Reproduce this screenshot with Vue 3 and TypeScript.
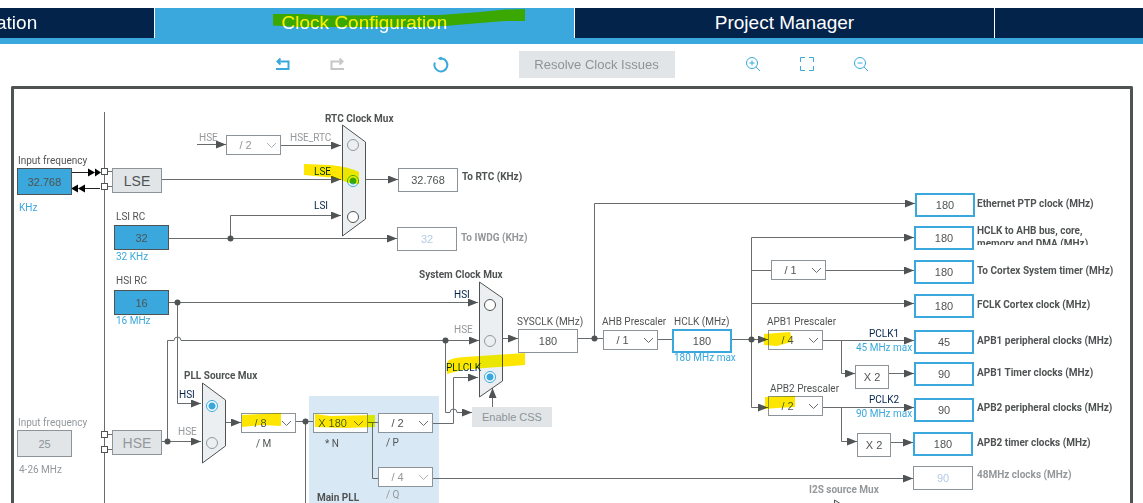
<script setup lang="ts">
import { reactive, ref } from 'vue'

type Tone = 'plain' | 'source' | 'clock' | 'muted' | 'off'

interface Field { id: string; x: number; y: number; value: string; tone: Tone; w?: number; h?: number; name?: string }
interface Divider { id: string; x: number; y: number; value: string; disabled?: boolean; name?: string }
interface Caption { x: number; y: number; text: string; kind: string; field?: string }
interface Choice { group: string; value: string; x: number; y: number; disabled?: boolean }

// Top-left corner of the drawing surface in diagram coordinates
const origin = { x: 14, y: 89 }

const place = (x: number, y: number, w?: number, h?: number) => ({
  left: `${x - origin.x}px`,
  top: `${y - origin.y}px`,
  ...(w ? { width: `${w}px` } : {}),
  ...(h ? { height: `${h}px` } : {}),
})

const fields = reactive<Field[]>([
  { id: 'lse-in', x: 17, y: 168, w: 55, h: 27, value: '32.768', tone: 'source' },
  { id: 'hse-in', x: 17, y: 430, w: 55, h: 27, value: '25', tone: 'off' },
  { id: 'lsi', x: 114, y: 225, w: 55, h: 25, value: '32', tone: 'source' },
  { id: 'hsi', x: 114, y: 290, w: 55, h: 25, value: '16', tone: 'source' },
  { id: 'rtc', x: 398, y: 168, value: '32.768', tone: 'plain' },
  { id: 'iwdg', x: 397, y: 227, value: '32', tone: 'muted' },
  { id: 'sysclk', x: 518, y: 329, value: '180', tone: 'plain' },
  { id: 'hclk', x: 672, y: 329, value: '180', tone: 'clock' },
  { id: 'eth', x: 915, y: 193, value: '180', tone: 'clock' },
  { id: 'ahb-bus', x: 914, y: 226, value: '180', tone: 'clock' },
  { id: 'cortex', x: 914, y: 260, value: '180', tone: 'clock' },
  { id: 'fclk', x: 914, y: 294, value: '180', tone: 'clock' },
  { id: 'apb1-per', x: 914, y: 330, value: '45', tone: 'clock' },
  { id: 'apb1-tim', x: 914, y: 362, value: '90', tone: 'clock' },
  { id: 'apb2-per', x: 914, y: 398, value: '90', tone: 'clock' },
  { id: 'apb2-tim', x: 913, y: 432, value: '180', tone: 'clock' },
  { id: 'clk48', x: 913, y: 466, value: '90', tone: 'muted' },
  { id: 'apb1-x2', x: 855, y: 365, w: 34, value: 'X 2', tone: 'plain', name: 'APB1 timer multiplier' },
  { id: 'apb2-x2', x: 857, y: 433, w: 34, value: 'X 2', tone: 'plain', name: 'APB2 timer multiplier' },
])

const dividers = reactive<Divider[]>([
  { id: 'hse-rtc', x: 226, y: 135, value: '/ 2', disabled: true },
  { id: 'pll-m', x: 241, y: 413, value: '/ 8' },
  { id: 'pll-n', x: 313, y: 413, value: 'X 180' },
  { id: 'pll-p', x: 378, y: 413, value: '/ 2' },
  { id: 'pll-q', x: 378, y: 467, value: '/ 4', disabled: true },
  { id: 'ahb', x: 603, y: 330, value: '/ 1' },
  { id: 'systick', x: 771, y: 260, value: '/ 1', name: 'Cortex System timer prescaler' },
  { id: 'apb1', x: 768, y: 330, value: '/ 4' },
  { id: 'apb2', x: 768, y: 396, value: '/ 2' },
])

// y is the vertical middle of the caption's first line
const captions: Caption[] = [
  { x: 18, y: 161, text: 'Input frequency', kind: 'text', field: 'lse-in' },
  { x: 19, y: 208, text: 'KHz', kind: 'unit' },
  { x: 18, y: 423, text: 'Input frequency', kind: 'dim', field: 'hse-in' },
  { x: 19, y: 470, text: '4-26 MHz', kind: 'dim' },
  { x: 116, y: 217, text: 'LSI RC', kind: 'text', field: 'lsi' },
  { x: 116, y: 257, text: '32 KHz', kind: 'unit' },
  { x: 116, y: 281, text: 'HSI RC', kind: 'text', field: 'hsi' },
  { x: 116, y: 321, text: '16 MHz', kind: 'unit' },
  { x: 199, y: 138, text: 'HSE', kind: 'dim' },
  { x: 290, y: 138, text: 'HSE_RTC', kind: 'dim', field: 'hse-rtc' },
  { x: 314, y: 172, text: 'LSE', kind: 'signal', field: 'rtc-LSE' },
  { x: 314, y: 206, text: 'LSI', kind: 'signal', field: 'rtc-LSI' },
  { x: 325, y: 119, text: 'RTC Clock Mux', kind: 'title' },
  { x: 462, y: 177, text: 'To RTC (KHz)', kind: 'title', field: 'rtc' },
  { x: 461, y: 238, text: 'To IWDG (KHz)', kind: 'title dim', field: 'iwdg' },
  { x: 419, y: 275, text: 'System Clock Mux', kind: 'title' },
  { x: 454, y: 295, text: 'HSI', kind: 'signal', field: 'sys-HSI' },
  { x: 454, y: 330, text: 'HSE', kind: 'dim', field: 'sys-HSE' },
  { x: 446, y: 368, text: 'PLLCLK', kind: 'signal', field: 'sys-PLLCLK' },
  { x: 184, y: 376, text: 'PLL Source Mux', kind: 'title' },
  { x: 179, y: 395, text: 'HSI', kind: 'signal', field: 'pll-HSI' },
  { x: 178, y: 432, text: 'HSE', kind: 'dim', field: 'pll-HSE' },
  { x: 256, y: 444, text: '/ M', kind: 'text', field: 'pll-m' },
  { x: 325, y: 444, text: '* N', kind: 'text', field: 'pll-n' },
  { x: 386, y: 443, text: '/ P', kind: 'text', field: 'pll-p' },
  { x: 386, y: 495, text: '/ Q', kind: 'dim', field: 'pll-q' },
  { x: 317, y: 498, text: 'Main PLL', kind: 'title' },
  { x: 517, y: 322, text: 'SYSCLK (MHz)', kind: 'text', field: 'sysclk' },
  { x: 602, y: 322, text: 'AHB Prescaler', kind: 'text', field: 'ahb' },
  { x: 674, y: 322, text: 'HCLK (MHz)', kind: 'text', field: 'hclk' },
  { x: 674, y: 358, text: '180 MHz max', kind: 'unit' },
  { x: 767, y: 322, text: 'APB1 Prescaler', kind: 'text', field: 'apb1' },
  { x: 770, y: 389, text: 'APB2 Prescaler', kind: 'text', field: 'apb2' },
  { x: 869, y: 334, text: 'PCLK1', kind: 'signal' },
  { x: 856, y: 348, text: '45 MHz max', kind: 'unit' },
  { x: 869, y: 400, text: 'PCLK2', kind: 'signal' },
  { x: 856, y: 414, text: '90 MHz max', kind: 'unit' },
  { x: 809, y: 490, text: 'I2S source Mux', kind: 'title dim' },
  { x: 977, y: 204, text: 'Ethernet PTP clock (MHz)', kind: 'title', field: 'eth' },
  { x: 977, y: 231, text: 'HCLK to AHB bus, core,\nmemory and DMA (MHz)', kind: 'title clipped', field: 'ahb-bus' },
  { x: 977, y: 271, text: 'To Cortex System timer (MHz)', kind: 'title', field: 'cortex' },
  { x: 977, y: 305, text: 'FCLK Cortex clock (MHz)', kind: 'title', field: 'fclk' },
  { x: 977, y: 341, text: 'APB1 peripheral clocks (MHz)', kind: 'title', field: 'apb1-per' },
  { x: 977, y: 373, text: 'APB1 Timer clocks (MHz)', kind: 'title', field: 'apb1-tim' },
  { x: 977, y: 408, text: 'APB2 peripheral clocks (MHz)', kind: 'title', field: 'apb2-per' },
  { x: 977, y: 443, text: 'APB2 timer clocks (MHz)', kind: 'title', field: 'apb2-tim' },
  { x: 977, y: 475, text: '48MHz clocks (MHz)', kind: 'title dim', field: 'clk48' },
]

const choices: Choice[] = [
  { group: 'rtc', value: 'HSE', x: 353, y: 145, disabled: true },
  { group: 'rtc', value: 'LSE', x: 353, y: 181 },
  { group: 'rtc', value: 'LSI', x: 353, y: 217 },
  { group: 'sys', value: 'HSI', x: 490, y: 305 },
  { group: 'sys', value: 'HSE', x: 490, y: 341, disabled: true },
  { group: 'sys', value: 'PLLCLK', x: 490, y: 377 },
  { group: 'pll', value: 'HSI', x: 212, y: 406 },
  { group: 'pll', value: 'HSE', x: 212, y: 443, disabled: true },
]
const selected = reactive<Record<string, string>>({ rtc: 'LSE', sys: 'PLLCLK', pll: 'HSI' })

const arrows = [
  'M197 144.5H226', 'M281 145.5H341', 'M162 179.5H341', 'M230.5 238.5V215.5H341', 'M366 179.5H398',
  'M169 238.5H397', 'M169 302.5H478', 'M177.5 302.5V403.5H201', 'M162 441.5H201',
  'M167.5 441.5V340.5H174A3.5 3.5 0 0 1 181 340.5H479', 'M226 422.5H241',
  'M433 423.5H453.5V377.5H478', 'M445.5 340.5V412.5H450A3.5 3.5 0 0 1 457 412.5H472',
  'M492.5 407V388', 'M503 338.5H518', 'M594.5 338.5V203.5H915', 'M732 339.5H768',
  'M751.5 339.5V237.5H914', 'M826 270.5H914', 'M751.5 303.5H914', 'M823 340.5H914',
  'M841.5 340.5V373.5H855', 'M889 373.5H914', 'M751.5 339.5V407.5H768', 'M823 407.5H914',
  'M841.5 407.5V441.5H857', 'M891 442.5H913', 'M433 478.5H913',
]
const links = [
  'M104.5 112V520', 'M107 171.5H112M107 186.5H112M107 434.5H112M107 449.5H112',
  'M296 421.5H313M305.5 421.5V520', 'M368 422.5H378M372.5 422.5V478.5H378',
  'M578 338.5H603', 'M658 339.5H672', 'M751.5 270.5H771',
]
const joints = [[230.5, 238.5], [177.5, 302.5], [167.5, 441.5], [305.5, 421.5], [445.5, 340.5], [594.5, 338.5], [751.5, 339.5]]
const ports = [171, 186, 434, 449]
const muxes = [
  '342.5,125 365.5,142 365.5,219 342.5,236',
  '479.5,282 502.5,298 502.5,381 479.5,397',
  '202.5,383 225.5,400 225.5,446 202.5,463',
]
const marks = [
  'M304 164L330 165Q350 167 359 172V184L349 183L336 178L304 175Z',
  'M447 363Q448 358 465 357L525 353L525 365L485 368L462 370L447 374Z',
  'M242 415L281 413L281 426L262 425L242 427Z',
  'M315 414L330 416L375 415L375 427L345 428L315 427Z',
  'M764 334L790 332L791 335L791 342L777 346L764 345Z',
  'M765 397L795 396L795 407L777 408L765 409Z',
]
const tab = ref('Clock Configuration')
const tabs = ['ation', 'Clock Configuration', 'Project Manager', '']
</script>

<template>
  <div class="page">
    <nav class="tabs" aria-label="Views">
      <button v-for="name in tabs" :key="name" type="button" class="tab"
        :class="{ active: tab === name, cut: name === 'ation' }" :aria-label="name || 'Tools'" @click="tab = name">
        {{ name }}
        <svg v-if="name === 'Clock Configuration'" class="tab-mark" width="252" height="20" viewBox="273 8 252 20" aria-hidden="true">
          <path d="M273 14L300 14L330 15.500L440 15L480 12L505 9.500L525 9V21L505 21L480 23L445 26L420 27H300L273 25.500Z" />
        </svg>
      </button>
    </nav>

    <div class="toolbar" role="toolbar">
      <button type="button" class="tool" aria-label="Undo">
        <svg viewBox="0 0 20 20"><path class="bold" d="M3 15H15.500V7.500H5.500M7.500 4.500L4.500 7.500L7.500 10.500" /></svg>
      </button>
      <button type="button" class="tool" aria-label="Redo" disabled>
        <svg viewBox="0 0 20 20"><path class="bold" d="M17 15H4.500V7.500H14.500M12.500 4.500L15.500 7.500L12.500 10.500" /></svg>
      </button>
      <button type="button" class="tool refresh" aria-label="Refresh">
        <svg viewBox="0 0 20 20"><path class="bold" d="M3.800 8.500A6.500 6.500 0 1 0 11 4.500H8.500" /><path class="solid" d="M6.500 4.500L10.500 2.500V6.500Z" /></svg>
      </button>
      <button type="button" class="resolve" disabled>Resolve Clock Issues</button>
      <button type="button" class="tool" aria-label="Zoom in">
        <svg viewBox="0 0 20 20"><circle cx="9" cy="9" r="5.500" /><path d="M13 13L17 17M6.500 9H11.500M9 6.500V11.500" /></svg>
      </button>
      <button type="button" class="tool" aria-label="Fit">
        <svg viewBox="0 0 20 20"><path d="M3.500 8V3.500H8M12 3.500H16.500V8M16.500 12V16.500H12M8 16.500H3.500V12" /></svg>
      </button>
      <button type="button" class="tool" aria-label="Zoom out">
        <svg viewBox="0 0 20 20"><circle cx="9" cy="9" r="5.500" /><path d="M13 13L17 17M6.500 9H11.500" /></svg>
      </button>
    </div>

    <main class="board">
      <svg class="wires" width="1116" height="431" viewBox="14 89 1116 431" aria-hidden="true">
        <defs>
          <marker id="tip" markerUnits="userSpaceOnUse" markerWidth="10" markerHeight="8" refX="10" refY="4" orient="auto">
            <path d="M0 0L10 4L0 8Z" fill="#505354" />
          </marker>
        </defs>
        <rect x="309" y="396" width="130" height="124" fill="#d9e8f5" />
        <path v-for="d in links" :key="d" :d="d" class="wire" />
        <path v-for="d in arrows" :key="d" :d="d" class="wire" marker-end="url(#tip)" />
        <circle v-for="(j, i) in joints" :key="i" :cx="j[0]" :cy="j[1]" r="3" fill="#505354" />
        <rect v-for="y in ports" :key="y" x="101.500" :y="y - 2.5" width="6" height="6" class="port" />
        <path d="M72 172.500H89M85 188.500H100" stroke="#222" />
        <path d="M88 168.500L95 172.500L88 176.500ZM95 168.500L101 172.500L95 176.500ZM85 184.500L78 188.500L85 192.500ZM78 184.500L71 188.500L78 192.500Z" />
        <polygon v-for="p in muxes" :key="p" :points="p" class="mux" />
        <path d="M834.500 520V500L846 507" class="mux" />
      </svg>

      <template v-for="c in captions" :key="c.text + c.y">
        <label v-if="c.field" :for="c.field" class="caption" :class="c.kind" :style="place(c.x, c.y - 7)">{{ c.text }}</label>
        <span v-else class="caption" :class="c.kind" :style="place(c.x, c.y - 7)">{{ c.text }}</span>
      </template>

      <button type="button" class="oscillator" :style="place(112, 168, 50, 25)">LSE</button>
      <button type="button" class="oscillator" disabled :style="place(112, 430, 50, 25)">HSE</button>
      <button type="button" class="css-button" disabled :style="place(472, 407, 80, 20)">Enable CSS</button>

      <input v-for="f in fields" :id="f.id" :key="f.id" v-model="f.value" type="text" class="field" :class="f.tone"
        :aria-label="f.name" :disabled="f.tone === 'off' || f.tone === 'muted'" :style="place(f.x, f.y, f.w ?? 60, f.h ?? 24)">

      <div v-for="d in dividers" :key="d.id" class="divider" :class="{ disabled: d.disabled }" :style="place(d.x, d.y)">
        <select :id="d.id" v-model="d.value" :disabled="d.disabled" :aria-label="d.name">
          <option>{{ d.value }}</option>
        </select>
        <svg width="11" height="7" viewBox="0 0 11 7" aria-hidden="true"><path d="M1 1L5.500 5.500L10 1" /></svg>
      </div>

      <input v-for="c in choices" :id="`${c.group}-${c.value}`" :key="c.group + c.value" v-model="selected[c.group]"
        type="radio" class="choice" :name="c.group" :value="c.value" :disabled="c.disabled"
        :aria-label="c.value" :style="place(c.x - 6, c.y - 6)">

      <svg class="marks" width="1116" height="431" viewBox="14 89 1116 431" aria-hidden="true">
        <path v-for="d in marks" :key="d" :d="d" />
      </svg>
    </main>
  </div>
</template>

<style>
body {
  margin: 0;
  background: #fff;
}
</style>

<style scoped>
.page {
  display: flex;
  flex-direction: column;
  box-sizing: border-box;
  height: 100vh;
  padding-top: 8px;
  overflow: hidden;
  background: #fff;
  font-family: "Liberation Sans", Arial, sans-serif;
}

button,
input,
select {
  box-sizing: border-box;
  margin: 0;
  padding: 0;
  border-radius: 0;
  font-family: inherit;
}

.tabs {
  display: grid;
  flex: none;
  grid-template-columns: 155fr 420fr 420fr 148fr;
  border-bottom: 6px solid #3aa8dc;
}

.tab {
  position: relative;
  height: 30px;
  border: 0;
  border-right: 1px solid #fff;
  background: #03234b;
  color: #fff;
  font-size: 19px;
  line-height: 30px;
}

.tab:last-child {
  border-right: 0;
}

.tab.cut {
  text-align: left;
  text-indent: -4px;
}

.tab.active {
  background: #3aa8dc;
}

.tab-mark {
  position: absolute;
  top: 0;
  left: 118px;
  fill: #ffe600;
  mix-blend-mode: darken;
}

.toolbar {
  display: flex;
  flex: none;
  align-items: center;
  justify-content: center;
  box-sizing: border-box;
  height: 42px;
  padding-bottom: 2px;
  gap: 34px;
}

.tool {
  width: 20px;
  height: 20px;
  border: 0;
  background: none;
}

.tool svg {
  display: block;
  fill: none;
  stroke: #3aa8dc;
}

.tool .bold {
  stroke-width: 2;
}

.tool .solid {
  fill: #3aa8dc;
  stroke: none;
}

.tool:disabled svg {
  stroke: #c4c6c8;
}

.refresh {
  margin-left: 50px;
}

.resolve {
  width: 156px;
  height: 27px;
  margin: 0 34px;
  border: 0;
  background: #e1e5e8;
  color: #8c9499;
  font-size: 13px;
}

.board {
  position: relative;
  flex: 1;
  margin: 0 10px 0 11px;
  border: 3px solid #505354;
  border-bottom: 0;
  border-radius: 2px 2px 0 0;
  overflow: hidden;
}

.wires,
.marks {
  position: absolute;
  top: 0;
  left: 0;
}

.marks {
  fill: #ffe600;
  mix-blend-mode: darken;
  pointer-events: none;
}

.wire {
  fill: none;
  stroke: #686c6e;
}

.port {
  fill: #fff;
  stroke: #505354;
}

.mux {
  fill: #ebeff2;
  stroke: #505354;
}

.caption {
  position: absolute;
  color: #505354;
  font-family: Roboto, "Liberation Sans", sans-serif;
  font-size: 10px;
  line-height: 14px;
  white-space: pre;
}

.caption.title {
  font-weight: bold;
}

.caption.clipped {
  height: 21px;
  line-height: 13px;
  overflow: hidden;
}

.caption.dim {
  color: #94989b;
}

.caption.unit {
  color: #3aa8dc;
}

.caption.signal {
  color: #03234b;
}

.oscillator {
  position: absolute;
  border: 1px solid #8c9499;
  background: #e1e5e8;
  color: #505354;
  font-size: 14px;
}

.oscillator:disabled {
  color: #94989b;
}

.css-button {
  position: absolute;
  border: 0;
  background: #e1e5e8;
  color: #8c9499;
  font-size: 11px;
}

.field {
  position: absolute;
  border: 1px solid #8c9499;
  background: #fff;
  color: #505354;
  font-size: 11px;
  text-align: center;
}

.field.source {
  border-color: #505354;
  background: #3aa8dc;
}

.field.clock {
  border: 2px solid #3aa8dc;
}

.field.muted {
  color: #b4cbe4;
}

.field.off {
  background: #e1e5e8;
  color: #8c9499;
}

.divider {
  position: absolute;
  width: 55px;
  height: 20px;
}

.divider select {
  width: 100%;
  height: 100%;
  padding-right: 16px;
  border: 1px solid #8c9499;
  appearance: none;
  background: #fff;
  color: #505354;
  font-size: 11px;
  opacity: 1;
  text-align-last: center;
}

.divider svg {
  position: absolute;
  top: 7px;
  right: 4px;
  fill: none;
  stroke: #686c6e;
  pointer-events: none;
}

.divider.disabled select {
  color: #94989b;
}

.divider.disabled svg {
  stroke: #b0b4b6;
}

.choice {
  position: absolute;
  width: 12px;
  height: 12px;
  border: 1px solid #505354;
  border-radius: 50%;
  appearance: none;
  background: #fff;
}

.choice:disabled {
  border-color: #94989b;
  background: #ebeff2;
}

.choice:checked {
  border-color: #3aa8dc;
  background: radial-gradient(circle, #3aa8dc 3px, #fff 4px);
}
</style>
